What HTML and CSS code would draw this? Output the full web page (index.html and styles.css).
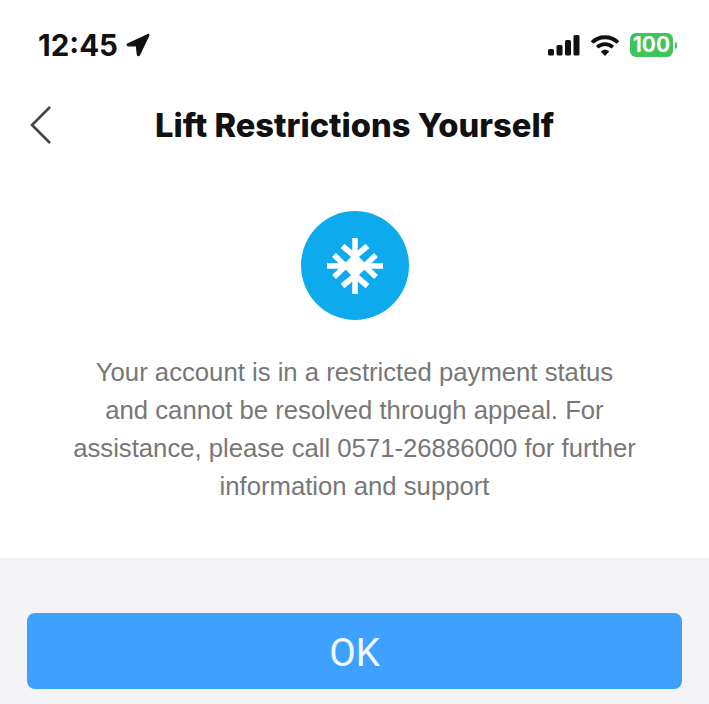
FILE: index.html
```html
<!DOCTYPE html>
<html lang="en">
<head>
  <meta charset="UTF-8" />
  <meta name="viewport" content="width=device-width, initial-scale=1.0"/>
  <title>Lift Restrictions Yourself</title>
  <link rel="stylesheet" href="styles.css">
</head>
<body>
  <div class="page">
    <div class="status-bar">
      <div class="status-left">
        <span class="time">12:45</span>
        <svg class="location" width="24" height="24" viewBox="0 0 24 24">
          <path d="M1.5 11 L22 1.5 Q23.5 1 22.6 3 L13.5 22 Q12 23.5 11.3 21.5 L10.5 13 L2 12.8 Q0.5 12 1.5 11 Z" fill="#111" stroke="#111" stroke-width="1.2"/>
        </svg>
      </div>
      <div class="status-right">
        <svg width="32" height="21" viewBox="0 0 32 21">
          <rect x="0" y="14" width="6" height="6.5" rx="1.5" fill="#111"/>
          <rect x="8.5" y="10" width="6" height="10.5" rx="1.5" fill="#111"/>
          <rect x="17" y="5" width="6" height="15.5" rx="1.5" fill="#111"/>
          <rect x="25.5" y="0" width="6" height="20.5" rx="1.5" fill="#111"/>
        </svg>
        <svg width="30" height="23" viewBox="0 0 30 23">
          <path d="M2 8.5 C9 1.5 21 1.5 28 8.5" fill="none" stroke="#111" stroke-width="3.8"/>
          <path d="M7.2 13.3 C11.5 9.1 18.5 9.1 22.8 13.3" fill="none" stroke="#111" stroke-width="3.6"/>
          <path d="M10.8 17.4 C13.3 15.2 16.7 15.2 19.2 17.4 L15 22 Z" fill="#111"/>
        </svg>
        <div class="battery">
          <span class="battery-body">100</span>
          <span class="battery-cap"></span>
        </div>
      </div>
    </div>

    <div class="nav-bar">
      <svg class="back" width="24" height="38" viewBox="0 0 24 38">
        <path d="M21 1 L3 19 L21 37" fill="none" stroke="#444" stroke-width="2.6"/>
      </svg>
      <h1>Lift Restrictions Yourself</h1>
    </div>

    <div class="content">
      <div class="icon-circle">
        <svg width="56" height="56" viewBox="0 0 56 56">
          <path d="M28 15 L41 28 L28 41 L15 28 Z" fill="#fff"/>
          <g fill="none" stroke="#fff" stroke-width="5.6">
            <path d="M28 0 V56"/>
            <path d="M0 28 H56"/>
            <path d="M15.5 8 L28 18.5 L40.5 8"/>
            <path d="M15.5 48 L28 37.5 L40.5 48"/>
            <path d="M7 17 L18.5 28 L7 39"/>
            <path d="M49 17 L37.5 28 L49 39"/>
          </g>
        </svg>
      </div>
      <p class="message">Your account is in a restricted payment status<br>and cannot be resolved through appeal. For<br>assistance, please call 0571-26886000 for further<br>information and support</p>
    </div>

    <div class="footer">
      <button class="ok-btn">OK</button>
    </div>
  </div>
</body>
</html>
```

FILE: styles.css
```css
body {
  margin: 0;
  background: #fff;
  font-family: "Liberation Sans", Arial, sans-serif;
}
.page {
  height: 704px;
  display: flex;
  flex-direction: column;
  overflow: hidden;
}
.status-bar {
  height: 32px;
  padding: 29px 32px 0 38px;
  display: flex;
  justify-content: space-between;
  align-items: center;
}
.status-left {
  display: flex;
  align-items: center;
  gap: 8px;
}
.time {
  font-family: Inter, sans-serif;
  font-size: 29.5px;
  font-weight: 700;
  color: #111;
}
.status-right {
  display: flex;
  align-items: center;
  gap: 10px;
}
.battery {
  display: flex;
  align-items: center;
  gap: 2px;
}
.battery-body {
  width: 43px;
  height: 24px;
  background: #3fc45c;
  border-radius: 6px;
  color: #fff;
  font-family: Inter, sans-serif;
  font-size: 21px;
  font-weight: 700;
  line-height: 24px;
  text-align: center;
}
.battery-cap {
  width: 2px;
  height: 7px;
  background: #3fc45c;
  border-radius: 0 2px 2px 0;
}
.nav-bar {
  height: 40px;
  margin-top: 44px;
  padding-left: 29px;
  display: flex;
  align-items: center;
}
.nav-bar h1 {
  margin: 0 0 0 102px;
  font-family: Inter, sans-serif;
  font-size: 32.7px;
  font-weight: 800;
  color: #111;
  white-space: nowrap;
}
.content {
  height: 413px;
  display: flex;
  flex-direction: column;
  align-items: center;
}
.icon-circle {
  width: 108px;
  height: 109px;
  margin-top: 66px;
  border-radius: 50%;
  background: #0eaaee;
  display: flex;
  align-items: center;
  justify-content: center;
}
.message {
  margin: 33px 0 0;
  font-size: 25.7px;
  line-height: 38px;
  color: #777;
  text-align: center;
  white-space: nowrap;
}
.footer {
  flex: 1;
  background: #f3f3f8;
  padding: 55px 27px 0;
}
.ok-btn {
  display: block;
  width: 100%;
  height: 76px;
  border: 0;
  border-radius: 8px;
  background: #3fa1ff;
  color: #f4f9ff;
  font-family: Roboto, sans-serif;
  font-size: 38.5px;
  font-weight: 400;
  padding: 3px 0 0;
}
```
